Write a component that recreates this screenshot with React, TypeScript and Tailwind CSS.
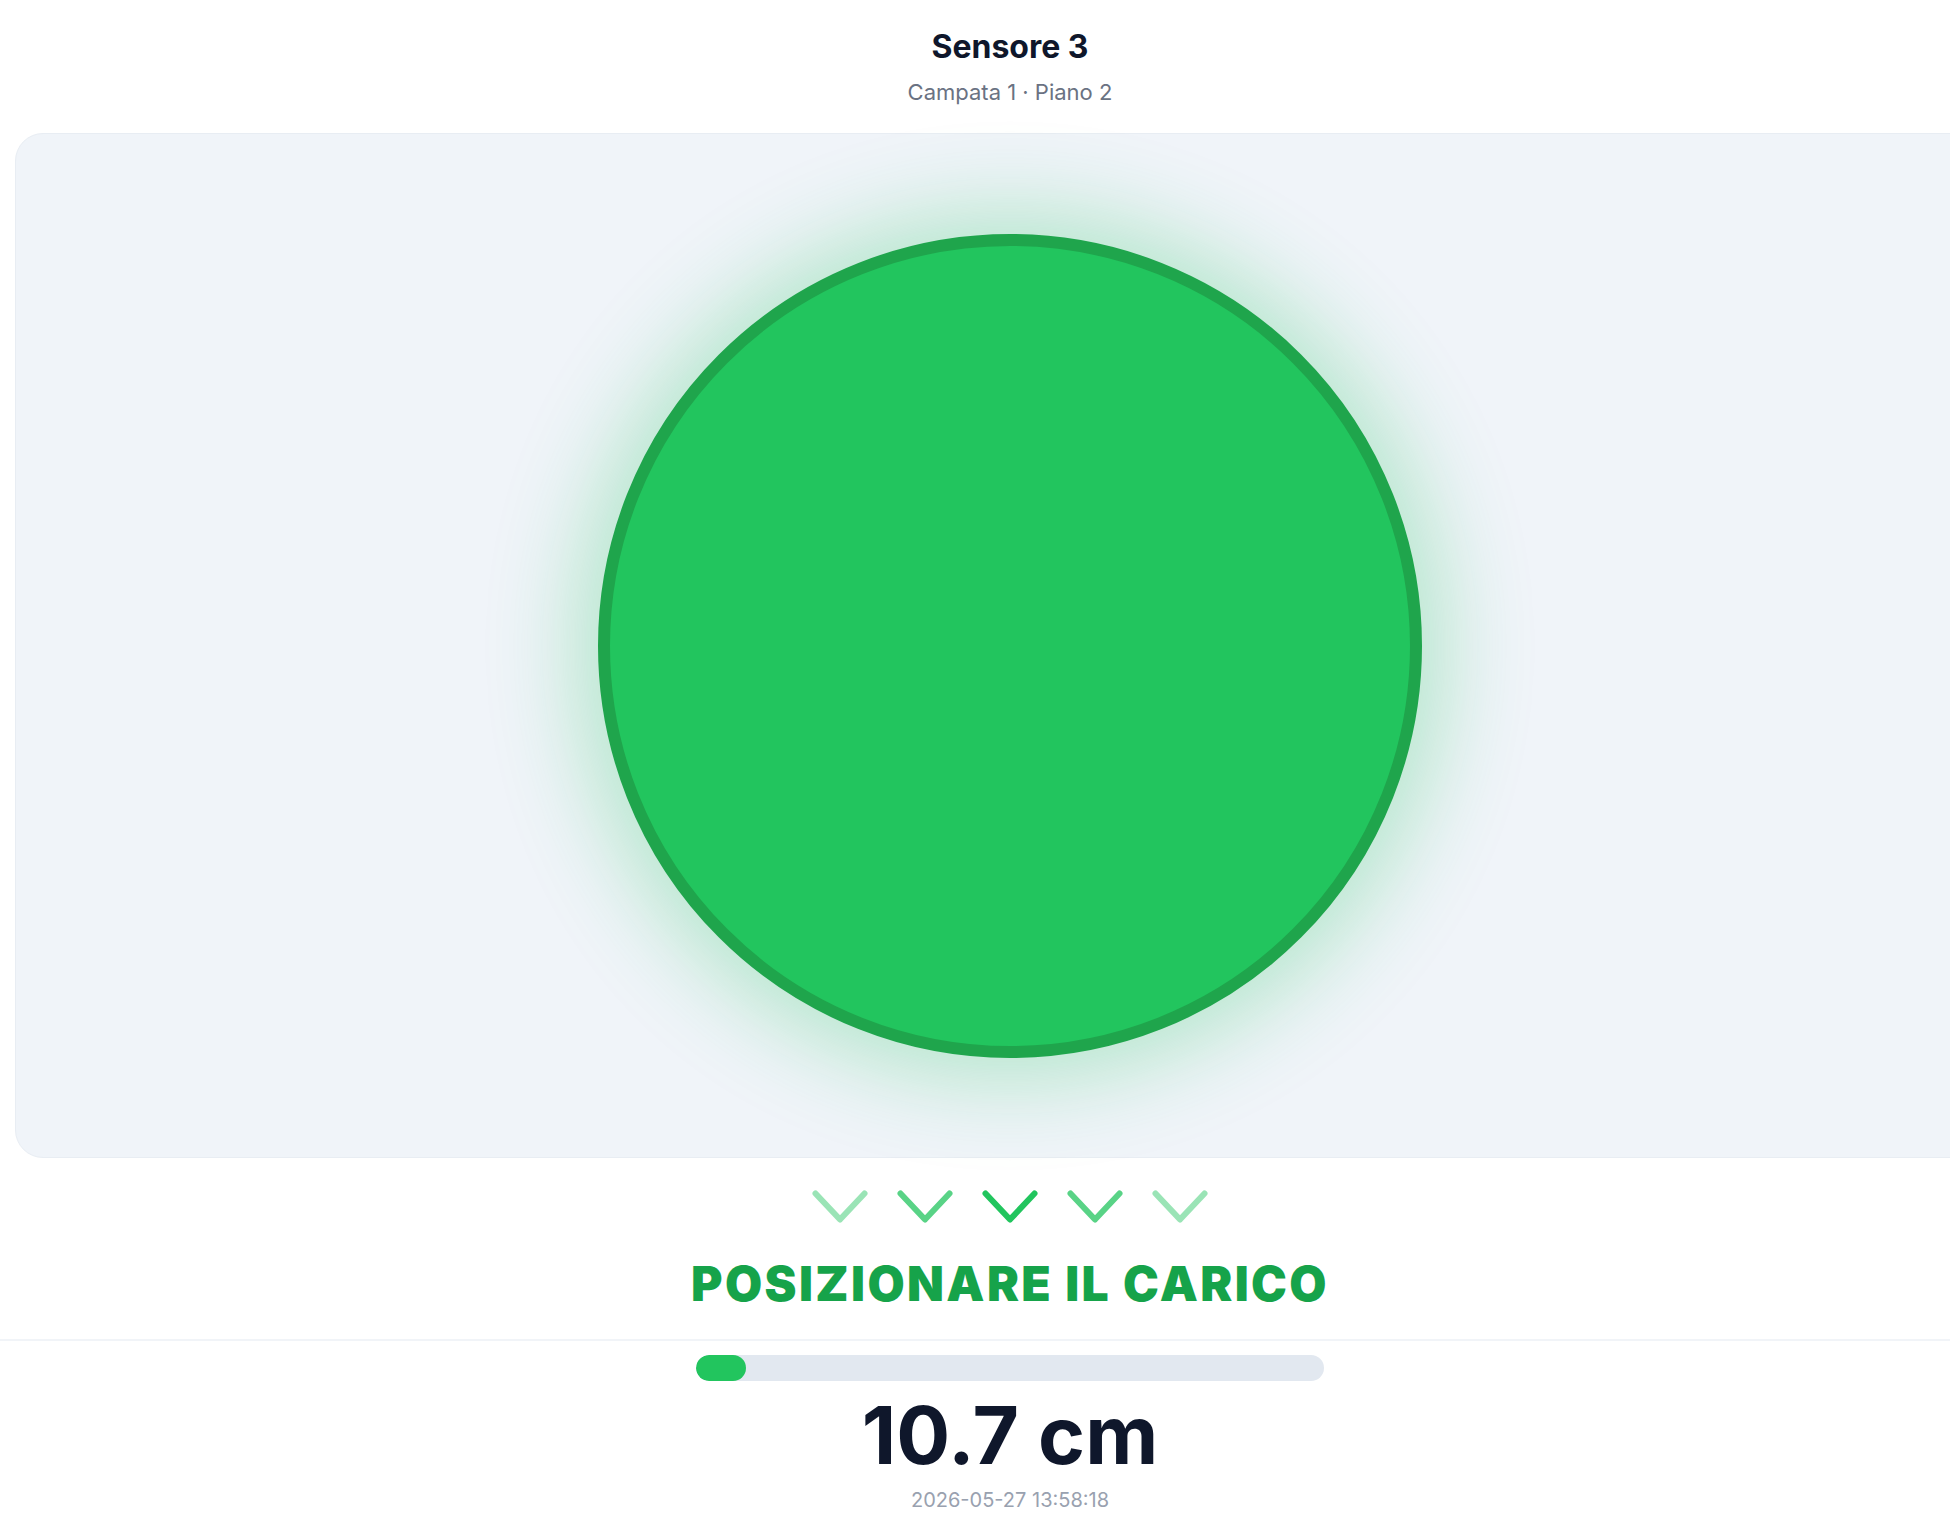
import React from "react";

const Chevron = ({ opacity }: { opacity: number }) => (
  <svg width="56" height="33" viewBox="0 0 56 33" fill="none" style={{ opacity }}>
    <path d="M3.5 3.5 L28 29.5 L52.5 3.5" stroke="#22c55e" strokeWidth="6" strokeLinecap="round" strokeLinejoin="round" />
  </svg>
);

export default function App() {
  const pct = 8;
  return (
    <div className="w-full overflow-hidden bg-white" style={{ fontFamily: "Inter, 'Noto Sans', sans-serif" }}>
      <div className="w-[2020px] flex flex-col items-center">
        <div className="pt-[27px] flex flex-col items-center">
          <h1 className="text-[32px] leading-[40px] font-bold text-slate-900">Sensore 3</h1>
          <p className="mt-[10px] text-[22px] leading-[30px] text-gray-500">Campata 1 · Piano 2</p>
        </div>
        <div className="mt-[26px] w-[1990px] h-[1025px] rounded-[28px] bg-[#f0f4f9] border border-[#e8edf3] flex items-center justify-center">
          <div className="w-[824px] h-[824px] rounded-full bg-[#22c55e] border-[12px] border-[#1fa54c] shadow-[0_0_90px_20px_rgba(34,197,94,0.3)]" />
        </div>
        <div className="mt-[32px] flex items-center gap-[29px]">
          <Chevron opacity={0.45} />
          <Chevron opacity={0.75} />
          <Chevron opacity={1} />
          <Chevron opacity={0.75} />
          <Chevron opacity={0.45} />
        </div>
        <div className="mt-[37px] text-[48px] leading-[48px] font-black tracking-wider text-[#16a34a]">
          POSIZIONARE IL CARICO
        </div>
        <div className="mt-[31px] w-full border-t-2 border-[#f1f4f8] flex flex-col items-center">
          <div className="mt-[14px] w-[628px] h-[26px] rounded-full bg-[#e2e8f0] overflow-hidden">
            <div className="h-full rounded-full bg-[#22c55e]" style={{ width: `${pct}%` }} />
          </div>
          <div className="mt-[14px] text-[80px] leading-[80px] font-bold text-slate-900">10.7 cm</div>
          <div className="mt-[11px] text-[20px] leading-[28px] text-gray-400">2026-05-27 13:58:18</div>
        </div>
      </div>
    </div>
  );
}
